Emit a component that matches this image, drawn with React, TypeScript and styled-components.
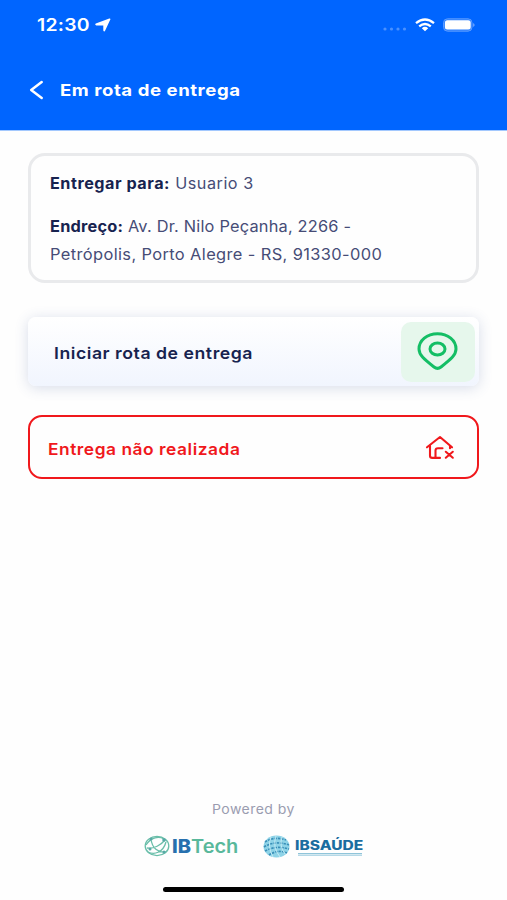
import React from "react";
import styled, { createGlobalStyle } from "styled-components";

const GlobalStyle = createGlobalStyle`
  * { box-sizing: border-box; }
  body { margin: 0; background: #fefefe; font-family: Inter, "Open Sans", sans-serif; }
  svg { display: block; flex: none; }
`;

const Screen = styled.div`
  height: 900px;
  display: flex;
  flex-direction: column;
  overflow: hidden;
  background: #fefefe;
`;

const Header = styled.header`
  height: 131px;
  background: #0065ff;
  color: #fff;
  border-bottom: 1px solid #a3c8fe;
`;

const StatusBar = styled.div`
  height: 49px;
  padding: 0 32px 0 37px;
  display: flex;
  align-items: center;
  justify-content: space-between;
`;

const Cluster = styled.div<{ $gap: number }>`
  display: flex;
  align-items: center;
  gap: ${(p) => p.$gap}px;
`;

const Clock = styled.time`
  width: 53px;
  font-size: 17px;
  line-height: 24px;
  font-weight: 600;
`;

const NavBar = styled.nav`
  height: 82px;
  padding-left: 29px;
  display: flex;
  align-items: center;
  gap: 16px;
`;

const Wide = styled.span<{ $x?: number; $ls?: number }>`
  display: block;
  width: max-content;
  white-space: nowrap;
  letter-spacing: ${(p) => p.$ls ?? 0.5}px;
  transform: scaleX(${(p) => p.$x ?? 1.06});
  transform-origin: left center;
`;

const Title = styled.h1`
  margin: 0;
  font-size: 16.5px;
  line-height: 24px;
  font-weight: 700;
`;

const Content = styled.main`
  flex: 1;
  padding: 22px 28px 0;
`;

const AddressCard = styled.section`
  height: 130px;
  padding: 14px 18px 0 18.5px;
  border: 3px solid #e9eaec;
  border-radius: 17px;
  color: #464c76;
  font-size: 15.5px;
  line-height: 28px;
  b { color: #17234f; font-weight: 700; }
`;

const Field = styled.p`
  margin: 0 0 15px;
`;

const StartButton = styled.button`
  width: 451px;
  height: 69px;
  margin: 34px 0 29px;
  padding: 0 4px 0 26px;
  display: flex;
  align-items: center;
  justify-content: space-between;
  border: 0;
  border-radius: 8px;
  background: linear-gradient(#ffffff, #f1f5fe);
  box-shadow: 0 2px 14px rgba(60, 85, 150, 0.2);
  color: #17234f;
  font: 600 16.5px/24px Inter, sans-serif;
  text-align: left;
`;

const StartLabel = styled.span`
  padding-top: 3px;
`;

const PinTile = styled.span`
  width: 74px;
  height: 60px;
  padding-bottom: 1px;
  display: grid;
  place-items: center;
  border-radius: 10px;
  background: #e6f7ec;
`;

const FailButton = styled.button`
  width: 451px;
  height: 64px;
  padding: 3px 22px 0 18px;
  display: flex;
  align-items: center;
  justify-content: space-between;
  border: 2px solid #f0181c;
  border-radius: 14px;
  background: #fefefe;
  color: #f0181c;
  font: 600 16.5px/24px Inter, sans-serif;
  text-align: left;
`;

const Footer = styled.footer`
  height: 101px;
  display: flex;
  flex-direction: column;
  align-items: center;
`;

const Powered = styled.div`
  width: 84px;
  height: 20px;
  font-size: 13px;
  line-height: 20px;
  color: #9a9cb0;
`;

const Logos = styled.div`
  margin: 15px 0 0 1px;
  height: 24px;
  display: flex;
  align-items: center;
  gap: 23px;
`;

const TechName = styled.span`
  width: 68px;
  font-size: 18.5px;
  line-height: 24px;
  font-weight: 600;
  color: #58b89b;
  b { color: #2770ae; font-weight: 800; }
`;

const SaudeName = styled.span`
  width: 69px;
  padding-top: 2px;
  font-size: 12.5px;
  line-height: 14px;
  font-weight: 800;
  color: #1b6da0;
`;

const Tagline = styled.span`
  display: block;
  width: 64px;
  height: 3px;
  margin-left: 3px;
  border-top: 1px solid #90c4d9;
  border-bottom: 1px solid #b5d9e7;
  background: #d3e8f0;
`;

const HomeIndicator = styled.div`
  width: 181px;
  height: 5px;
  margin-top: 29px;
  border-radius: 3px;
  background: #000;
`;

export default function App() {
  return (
    <>
      <GlobalStyle />
      <Screen>
        <Header>
          <StatusBar>
            <Cluster $gap={5}>
              <Clock><Wide $x={1.14} $ls={0.2}>12:30</Wide></Clock>
              <svg width="16" height="14" viewBox="0 0 16 14">
                <path d="M.8 5.6 14.3.5Q16 .2 15.3 1.5L10.2 12.6Q9.2 14.4 8.3 12.6V7.6H1.4Q-.6 6.9.8 5.6Z" fill="#fff" />
              </svg>
            </Cluster>
            <Cluster $gap={8}>
              <svg width="24" height="14" viewBox="0 0 24 14" fill="#4a91ff">
                <circle cx="2" cy="11" r="1.6" /><circle cx="8.5" cy="11" r="1.6" />
                <circle cx="15" cy="11" r="1.6" /><circle cx="21.5" cy="11" r="1.6" />
              </svg>
              <svg width="20" height="14" viewBox="0 0 20 14" fill="none" stroke="#fff" strokeWidth="2.3">
                <path d="M1 5.2Q10-2.2 19 5.2M4.2 8.3Q10 3.6 15.8 8.3" />
                <path d="M6.8 10.2Q10 7.4 13.2 10.2L10 13.2Z" fill="#fff" stroke="none" />
              </svg>
              <svg width="32" height="14" viewBox="0 0 32 14">
                <rect x=".5" y=".8" width="28.5" height="12.4" rx="4" fill="#2b7fff" stroke="#5b9bff" />
                <rect x="1.9" y="2.3" width="25.8" height="9.2" rx="2.5" fill="#fff" />
                <path d="M30.2 5Q33 7 30.2 9Z" fill="#76aaff" />
              </svg>
            </Cluster>
          </StatusBar>
          <NavBar>
            <svg width="15" height="20" viewBox="0 0 15 20" fill="none" stroke="#fff" strokeWidth="2.5" strokeLinecap="round" strokeLinejoin="round">
              <path d="M12.7 2 2.2 10l10.5 8" />
            </svg>
            <Title><Wide $x={1.125}>Em rota de entrega</Wide></Title>
          </NavBar>
        </Header>
        <Content>
          <AddressCard>
            <Field><Wide $x={1.045}><b>Entregar para:</b> Usuario 3</Wide></Field>
            <Field>
              <Wide $x={1.055} $ls={0.19}><b>Endreço:</b> Av. Dr. Nilo Peçanha, 2266 -</Wide>
              <Wide $x={1.06} $ls={0.35}>Petrópolis, Porto Alegre - RS, 91330-000</Wide>
            </Field>
          </AddressCard>
          <StartButton>
            <StartLabel><Wide $x={1.07}>Iniciar rota de entrega</Wide></StartLabel>
            <PinTile>
              <svg width="42" height="38" viewBox="0 0 42 38" fill="none" stroke="#14be65" strokeWidth="3">
                <path d="M20.5 1.8C10 1.8 2 8.5 2 17C2 23 7 27 17 35Q20.5 37.8 24 35C34 27 39 23 39 17C39 8.5 31 1.8 20.5 1.8Z" />
                <ellipse cx="20.5" cy="17" rx="7.5" ry="6" />
              </svg>
            </PinTile>
          </StartButton>
          <FailButton>
            <Wide $x={1.052}>Entrega não realizada</Wide>
            <svg width="30" height="28" viewBox="0 0 30 28" fill="none" stroke="#f0181c" strokeWidth="2.1" strokeLinecap="round" strokeLinejoin="round">
              <path d="M2 12.3 15 2l12 10.3M5 11v9.7q0 2.2 2.2 2.2H15M10.5 22.3V15.5q0-2.3 2.5-2.3h4.5M25 11.2v2M20.8 16.8l7 5.9M27.8 16.8l-7 5.9" />
            </svg>
          </FailButton>
        </Content>
        <Footer>
          <Powered><Wide $x={1.08} $ls={0.4}>Powered by</Wide></Powered>
          <Logos>
            <Cluster $gap={2}>
              <svg width="26" height="22" viewBox="0 0 26 22" fill="none" stroke="#69bea9" strokeWidth="1.3">
                <ellipse cx="13" cy="11" rx="11.8" ry="9.6" />
                <path d="M2 10C7 2 15 1 20 4M4 17C10 20 19 18 22 7M7 4C8 13 14 18 22 17M3 13C10 14 17 10 21 5" />
                <g fill="#58a9a6" stroke="none"><circle cx="7" cy="4" r="1.5" /><circle cx="20" cy="5" r="1.8" /><circle cx="6" cy="14" r="1.5" /><circle cx="20" cy="17" r="1.5" /></g>
              </svg>
              <TechName><Wide $x={1.08} $ls={0}><b>IB</b>Tech</Wide></TechName>
            </Cluster>
            <Cluster $gap={5}>
              <svg width="27" height="23" viewBox="0 0 27 23" fill="none">
                <ellipse cx="13.5" cy="11.5" rx="13" ry="11" fill="#8ed3e7" />
                <path d="M2 7Q11 1 23 5M1 12Q12 5 26 10M2 16Q13 10 26 14M6 20Q15 14 24 18" stroke="#398fb8" strokeWidth="1.6" strokeDasharray="2.4 1" />
                <path d="M8 2Q4 11 10 22M13 1Q9 12 17 22M19 2Q16 11 22 19" stroke="#c9edf5" strokeWidth=".9" />
              </svg>
              <SaudeName><Wide $x={1.24} $ls={0}>IBSAÚDE</Wide><Tagline /></SaudeName>
            </Cluster>
          </Logos>
          <HomeIndicator />
        </Footer>
      </Screen>
    </>
  );
}
